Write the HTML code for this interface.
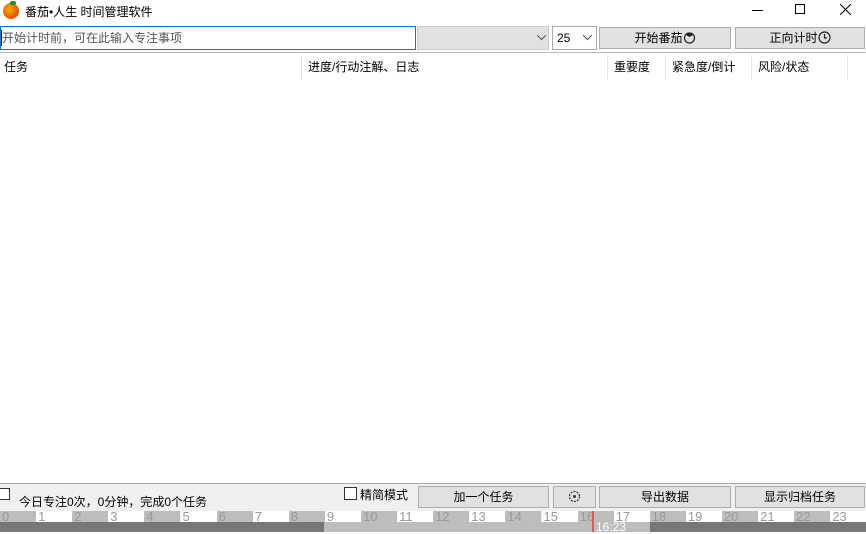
<!DOCTYPE html>
<html><head><meta charset="utf-8"><style>
*{margin:0;padding:0;box-sizing:border-box}
body{width:866px;height:532px;background:#fff;position:relative;overflow:hidden;font-family:"Liberation Sans","Noto Sans CJK SC",sans-serif;font-size:12px;color:#000}
.a{position:absolute}
.btn{position:absolute;background:#e1e1e1;border:1px solid #adadad;text-align:center;line-height:21px;font-size:12px}
.btn svg{vertical-align:-2px}
.hc{position:absolute;top:55px;height:25px;line-height:24px;padding-left:6px;border-left:1px solid #e5e5e5;font-size:12px}
.h{position:absolute;top:511px;height:11px;width:36.1px;font-size:13px;line-height:12px;color:#999;padding-left:2px;overflow:hidden}
</style></head><body>
<div class="a" style="left:3px;top:3px;width:16px;height:16px;border-radius:50%;background:radial-gradient(circle at 40% 40%,#ffb000,#e02000)"></div>
<div class="a" style="left:10px;top:1px;width:6px;height:4px;background:#2a8a2a;border-radius:2px"></div>
<div class="a" style="left:25px;top:3px;font-size:12px">番茄•人生 时间管理软件</div>
<div class="a" style="left:752px;top:10px;width:11px;height:1px;background:#000"></div>
<div class="a" style="left:795px;top:4px;width:10px;height:10px;border:1px solid #000"></div>
<svg class="a" style="left:840px;top:4px" width="11" height="11"><path d="M0 0L11 11M11 0L0 11" stroke="#000" stroke-width="1"/></svg>
<div class="a" style="left:0;top:26px;width:416px;height:24px;border:1px solid #0078d7;padding-left:1px;line-height:22px;color:#555">开始计时前，可在此输入专注事项</div>
<div class="a" style="left:1px;top:30px;width:1px;height:16px;background:#000"></div>
<div class="a" style="left:417px;top:26px;width:132px;height:24px;background:#e1e1e1;border:1px solid #ccc"></div>
<svg class="a" style="left:537px;top:35px" width="9" height="6"><path d="M0 0L4.5 4.5L9 0" stroke="#555" fill="none"/></svg>
<div class="a" style="left:552px;top:26px;width:45px;height:24px;border:1px solid #aaa;line-height:22px;padding-left:4px">25</div>
<svg class="a" style="left:583px;top:35px" width="9" height="6"><path d="M0 0L4.5 4.5L9 0" stroke="#555" fill="none"/></svg>
<div class="btn" style="left:599px;top:27px;width:132px;height:22px">开始番茄<svg width="13" height="13"><circle cx="6.5" cy="7" r="5" fill="none" stroke="#222" stroke-width="1.2"/><path d="M3 4Q6.5 1 10 4L6.5 6Z" fill="#222"/></svg></div>
<div class="btn" style="left:735px;top:27px;width:130px;height:22px">正向计时<svg width="13" height="13"><circle cx="6.5" cy="6.5" r="5.5" fill="none" stroke="#222" stroke-width="1.2"/><path d="M6.5 3V7H9" fill="none" stroke="#222" stroke-width="1.2"/></svg></div>
<div class="a" style="left:0;top:52px;width:866px;height:1px;background:#bbb"></div>
<div class="hc" style="left:0;border:none;padding-left:4px">任务</div>
<div class="hc" style="left:301px">进度/行动注解、日志</div>
<div class="hc" style="left:607px">重要度</div>
<div class="hc" style="left:665px">紧急度/倒计</div>
<div class="hc" style="left:751px">风险/状态</div>
<div class="hc" style="left:847px"></div>
<div class="a" style="left:0;top:483px;width:866px;height:49px;background:#f0f0f0"></div>
<div class="a" style="left:0;top:483px;width:866px;height:1px;background:#aaa"></div>
<div class="a" style="left:0;top:488px;width:10px;height:12px;border:1px solid #333;border-left:none;background:#fff"></div>
<div class="a" style="left:19px;top:493px">今日专注0次，0分钟，完成0个任务</div>
<div class="a" style="left:344px;top:487px;width:13px;height:13px;border:1px solid #333;background:#fff"></div>
<div class="a" style="left:360px;top:486px">精简模式</div>
<div class="btn" style="left:418px;top:486px;width:131px;height:22px">加一个任务</div>
<div class="btn" style="left:553px;top:486px;width:43px;height:22px"><svg width="13" height="13"><circle cx="6.5" cy="6.5" r="5" fill="none" stroke="#333" stroke-width="1.2" stroke-dasharray="2 1.2"/><circle cx="6.5" cy="6.5" r="1.5" fill="#333"/></svg></div>
<div class="btn" style="left:599px;top:486px;width:132px;height:22px">导出数据</div>
<div class="btn" style="left:735px;top:486px;width:130px;height:22px">显示归档任务</div>
<div class="h" style="left:0;background:#bdbdbd">0</div><div class="h" style="left:36.1px;background:#fff">1</div>
<div class="h" style="left:72.2px;background:#bdbdbd">2</div><div class="h" style="left:108.3px;background:#fff">3</div>
<div class="h" style="left:144.4px;background:#bdbdbd">4</div><div class="h" style="left:180.5px;background:#fff">5</div>
<div class="h" style="left:216.6px;background:#bdbdbd">6</div><div class="h" style="left:252.7px;background:#fff">7</div>
<div class="h" style="left:288.8px;background:#bdbdbd">8</div><div class="h" style="left:324.9px;background:#fff">9</div>
<div class="h" style="left:361px;background:#bdbdbd">10</div><div class="h" style="left:397.1px;background:#fff">11</div>
<div class="h" style="left:433.2px;background:#bdbdbd">12</div><div class="h" style="left:469.3px;background:#fff">13</div>
<div class="h" style="left:505.4px;background:#bdbdbd">14</div><div class="h" style="left:541.5px;background:#fff">15</div>
<div class="h" style="left:577.6px;background:#bdbdbd">16</div><div class="h" style="left:613.7px;background:#fff">17</div>
<div class="h" style="left:649.8px;background:#bdbdbd">18</div><div class="h" style="left:685.9px;background:#fff">19</div>
<div class="h" style="left:722px;background:#bdbdbd">20</div><div class="h" style="left:758.1px;background:#fff">21</div>
<div class="h" style="left:794.2px;background:#bdbdbd">22</div><div class="h" style="left:830.3px;background:#fff;width:36px">23</div>
<div class="a" style="left:0;top:522px;width:324px;height:10px;background:#777"></div>
<div class="a" style="left:324px;top:522px;width:326px;height:10px;background:#bdbdbd"></div>
<div class="a" style="left:650px;top:522px;width:216px;height:10px;background:#777"></div>
<div class="a" style="left:596px;top:521px;font-size:12px;color:#fff;line-height:12px">16:23</div>
<div class="a" style="left:592px;top:511px;width:2px;height:21px;background:#f05050"></div>
</body></html>
